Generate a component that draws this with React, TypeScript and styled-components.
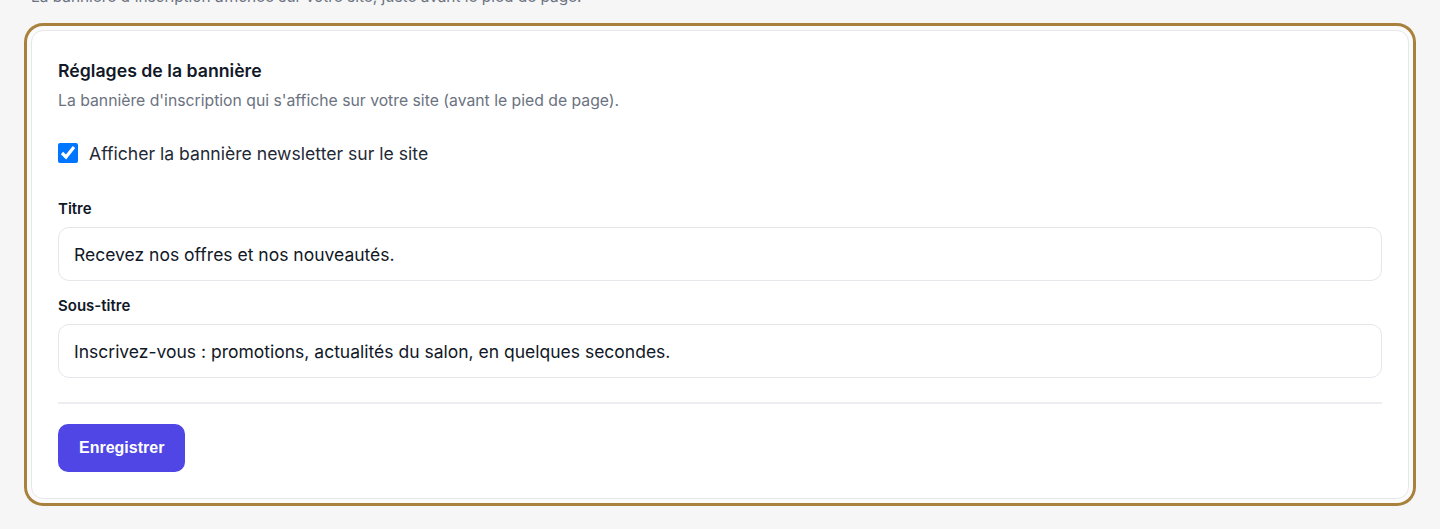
import styled, { createGlobalStyle } from 'styled-components';

const GlobalStyle = createGlobalStyle`
  html, body {
    margin: 0;
    padding: 0;
    background: #f6f6f6;
    font-family: 'Inter', 'Liberation Sans', sans-serif;
    overflow: hidden;
  }
  * {
    box-sizing: border-box;
  }
`;

const Page = styled.div`
  padding: 0 31px 30px;
  margin-top: -13px;
`;

const PageNote = styled.p`
  margin: 0 0 23px;
  font-size: 15.4px;
  line-height: 20px;
  color: #6b7280;
`;

const Card = styled.section`
  background: #ffffff;
  border: 1px solid #e5e7eb;
  border-radius: 12px;
  padding: 26px;
  box-shadow: 0 0 0 4px #fbfbfb, 0 0 0 7px #a8823d;
`;

const CardTitle = styled.h2`
  margin: 0;
  font-size: 17.7px;
  line-height: 28px;
  font-weight: 600;
  color: #111827;
`;

const CardDescription = styled.p`
  margin: 6px 0 0;
  font-size: 15.75px;
  line-height: 20px;
  color: #6b7280;
`;

const CheckRow = styled.label`
  display: flex;
  align-items: center;
  gap: 11px;
  margin-top: 30px;
  height: 24px;
  font-size: 17.6px;
  color: #1f2937;
  cursor: pointer;
`;

const Checkbox = styled.input`
  width: 20px;
  height: 20px;
  margin: 0;
  accent-color: #0075ff;
`;

const Field = styled.div<{ $first?: boolean }>`
  display: flex;
  flex-direction: column;
  gap: 8px;
  margin-top: ${p => (p.$first ? '34px' : '15px')};
`;

const FieldLabel = styled.label`
  font-size: 15px;
  line-height: 20px;
  font-weight: 600;
  color: #111827;
`;

const TextInput = styled.input`
  width: 100%;
  height: 54px;
  padding: 0 15px;
  border: 1px solid #e5e7eb;
  border-radius: 11px;
  font-family: inherit;
  font-size: 17.5px;
  color: #111827;
  background: #fff;
  outline: none;
`;

const Footer = styled.div`
  margin-top: 24px;
  padding-top: 20px;
  border-top: 2px solid #eceef1;
`;

const SaveButton = styled.button`
  height: 48px;
  padding: 0 21px;
  border: none;
  border-radius: 10px;
  background: #4f46e5;
  color: #ffffff;
  font-family: 'Liberation Sans', 'Inter', sans-serif;
  font-size: 16px;
  font-weight: 700;
  cursor: pointer;
`;

export default function App() {
  return (
    <>
      <GlobalStyle />
      <Page>
        <PageNote>La bannière d'inscription affichée sur votre site, juste avant le pied de page.</PageNote>
        <Card>
          <CardTitle>Réglages de la bannière</CardTitle>
          <CardDescription>
            La bannière d'inscription qui s'affiche sur votre site (avant le pied de page).
          </CardDescription>
          <CheckRow>
            <Checkbox type="checkbox" defaultChecked />
            Afficher la bannière newsletter sur le site
          </CheckRow>
          <Field $first>
            <FieldLabel htmlFor="titre">Titre</FieldLabel>
            <TextInput id="titre" defaultValue="Recevez nos offres et nos nouveautés." />
          </Field>
          <Field>
            <FieldLabel htmlFor="sous-titre">Sous-titre</FieldLabel>
            <TextInput
              id="sous-titre"
              defaultValue="Inscrivez-vous : promotions, actualités du salon, en quelques secondes."
            />
          </Field>
          <Footer>
            <SaveButton type="button">Enregistrer</SaveButton>
          </Footer>
        </Card>
      </Page>
    </>
  );
}
